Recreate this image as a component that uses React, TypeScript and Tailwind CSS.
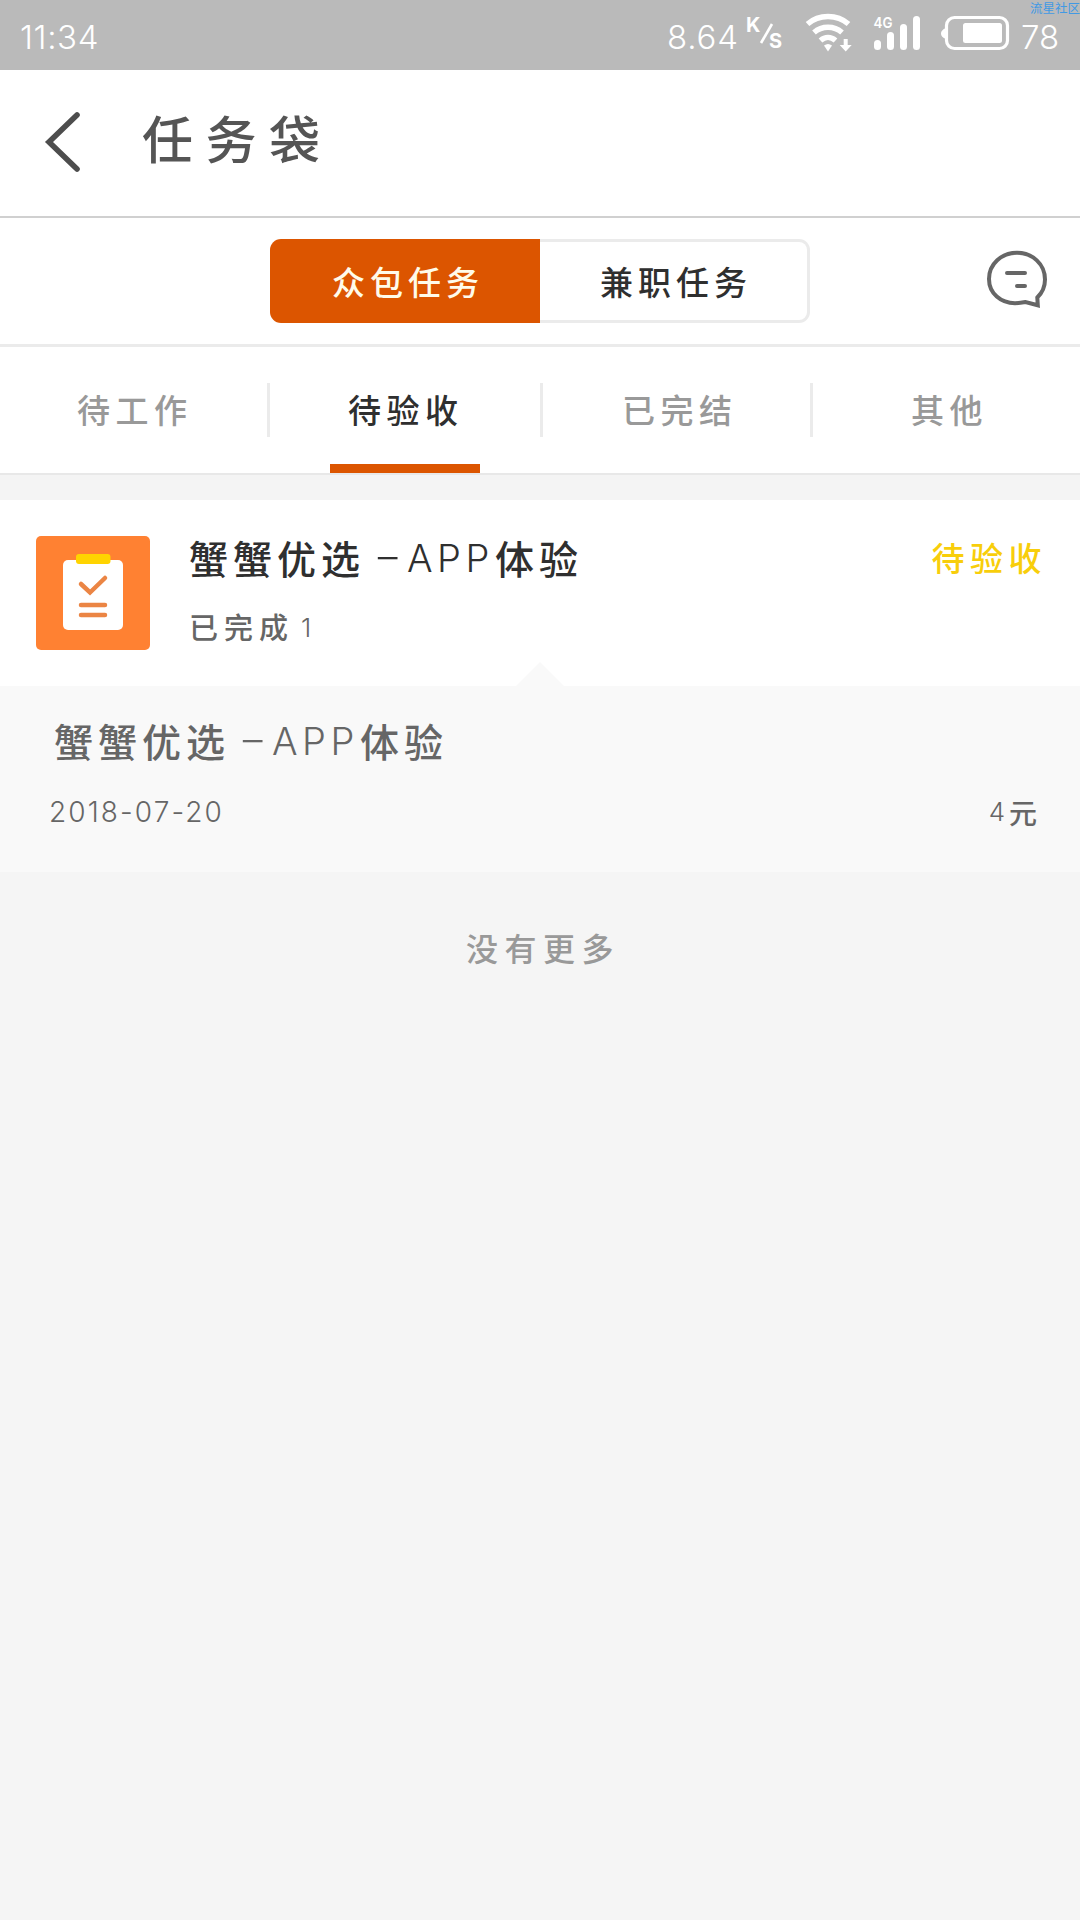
import clsx from "clsx";

const tabs = [
  { label: "待工作", pad: "pl-[77px]", width: "w-[267px]" },
  { label: "待验收", pad: "pl-[78px]", width: "w-[270px]" },
  { label: "已完结", pad: "pl-[79px]", width: "w-[267px]" },
  { label: "其他", pad: "pl-[98px]", width: "w-[267px]" },
];

const StatusBar = () => (
  <div className="relative flex h-[70px] bg-[#bababa] pt-[13px] font-['Inter'] text-[33px] leading-[48px] font-light text-white">
    <span className="ml-[20px] w-[647px] tracking-[0.6px]">11:34</span>
    <span className="w-[78px] tracking-[0.8px]">8.64</span>
    <svg className="-mt-[13px] h-[70px] w-[56px]" viewBox="745 0 56 70">
      <path d="M772 24L761 43" stroke="#fff" strokeWidth="2.6" />
      <text x="746" y="32" fontSize="20" fontWeight="700" fill="#fff">
        K
      </text>
      <text x="769" y="48" fontSize="20" fontWeight="700" fill="#fff">
        S
      </text>
    </svg>
    <svg className="-mt-[13px] h-[70px] w-[218px]" viewBox="801 0 218 70">
      {/* wifi */}
      <g fill="none" stroke="#fff" strokeWidth="5.500">
        <path d="M807.500 24C819 14 837 14 848.500 24" />
        <path d="M814 32.500C822 25.500 834 25.500 842 32.500" />
        <path d="M820.500 40.500C825 36.500 831 36.500 835.500 40.500" />
      </g>
      <path d="M824 45.500q4-3 8 0l-4 6z" fill="#fff" />
      <path d="M843.700 39h4v6h4l-6 6.500l-6-6.500h4z" fill="#fff" />
      {/* signal */}
      <text x="873.500" y="28" fontSize="15" fontWeight="600" fill="#fff" textLength="19" lengthAdjust="spacingAndGlyphs">
        4G
      </text>
      <g fill="#fff">
        <rect x="874" y="40" width="7" height="10" rx="3.500" />
        <rect x="887" y="32" width="7" height="18" rx="3.500" />
        <rect x="900" y="24" width="7" height="26" rx="3.500" />
        <rect x="913" y="16" width="7" height="34" rx="3.500" />
      </g>
      {/* battery */}
      <rect x="946.500" y="17.500" width="61" height="31" rx="8" fill="none" stroke="#fff" strokeWidth="3.200" />
      <path d="M946 28q-5 2-5 5.500t5 5.500z" fill="#fff" />
      <rect x="963" y="23" width="39" height="20" rx="2.500" fill="#fff" />
    </svg>
    <span className="ml-[2px]">78</span>
    <span className="absolute top-0 right-0 font-['Noto_Sans_CJK_SC'] text-[12.500px] leading-[15px] font-normal whitespace-nowrap text-[#4199e4]">
      流星社区
    </span>
  </div>
);

const Header = () => (
  <div className="flex h-[148px] items-center border-b-2 border-[#d0d0d0]">
    <svg className="mt-[-5px] ml-[40px] h-[64px] w-[44px]" viewBox="40 108 44 64">
      <path d="M77 114L49 141L77 168" fill="none" stroke="#4d4d4d" strokeWidth="5.600" strokeLinecap="round" />
    </svg>
    <h1 className="mt-[-11px] ml-[58px] text-[51px] leading-none font-medium tracking-[12.500px] text-[#555]">
      任务袋
    </h1>
  </div>
);

const ModeSwitch = () => (
  <div className="flex h-[129px] items-start border-b-[3px] border-[#ebebeb] pt-[21px] pl-[270px] text-[33px] tracking-[5px]">
    <button className="h-[84px] w-[270px] rounded-l-[11px] bg-[#dc5500] pl-[62px] text-left leading-[83px] font-medium text-[#fffbea]">
      众包任务
    </button>
    <button className="h-[84px] w-[270px] rounded-r-[11px] border-[3px] border-l-0 border-[#ebebeb] pl-[60px] text-left leading-[77px] font-medium text-[#2f2f2f]">
      兼职任务
    </button>
    <svg className="mt-[8px] ml-[174px] h-[66px] w-[66px]" viewBox="984 247 66 66">
      <g fill="none" stroke="#666" strokeWidth="4" strokeLinecap="round">
        <path d="M1037.300 297.500C1042 293 1045 286.500 1045 279.500C1045 264 1032.500 252.800 1017 252.800C1001.500 252.800 989 264 989 279C989 293.500 1001 303.200 1015 303.200C1019 303.200 1022.500 302.600 1025.500 302L1037.800 305.300Z" />
        <path d="M1007 273H1025M1017 286H1025" />
      </g>
    </svg>
  </div>
);

const Tabs = () => (
  <div className="flex h-[128px] items-start border-b-2 border-[#e8e8e8]">
    {tabs.map((tab, i) => (
      <div key={tab.label} className="flex">
        {i > 0 && <div className="mt-[36px] h-[54px] w-[3px] bg-[#ebebeb]" />}
        <div className={clsx("relative h-[126px]", tab.width)}>
          <div
            className={clsx(
              "pt-[35px] text-[33px] leading-[54px] font-medium tracking-[5.500px] whitespace-nowrap",
              tab.pad,
              i === 1 ? "text-[#2f2f2f]" : "text-[#999]"
            )}
          >
            {tab.label}
          </div>
          {i === 1 && (
            <div className="absolute bottom-0 left-[60px] h-[9px] w-[150px] bg-[#dc5500]" />
          )}
        </div>
      </div>
    ))}
  </div>
);

const TaskTitle = () => (
  <div className="flex text-[39px] leading-[56px] font-medium tracking-[5px] whitespace-nowrap">
    <span className="w-[184px]">蟹蟹优选</span>
    <span className="w-[20px] origin-left scale-x-[1.75] font-['Inter'] text-[37px] font-light tracking-normal">
      -
    </span>
    <span className="ml-[14px] w-[88px] font-['Inter'] text-[38px] leading-[58px] font-light tracking-[4.500px]">
      APP
    </span>
    <span>体验</span>
  </div>
);

const TaskCard = () => (
  <div className="relative flex h-[186px] bg-white pt-[36px] pr-[30px] pl-[36px]">
    <svg className="h-[114px] w-[114px]" viewBox="0 0 114 114">
      <rect width="114" height="114" rx="5" fill="#ff8132" />
      <rect x="27" y="24" width="60" height="70" rx="5" fill="#fff" />
      <rect x="40" y="18" width="34.500" height="10" rx="3" fill="#ffd400" />
      <g fill="none" stroke="#eb8544" strokeWidth="4.500" strokeLinecap="round">
        <path d="M45 48L54 56.500L69 42" />
        <path d="M45 69H69M45 79H69" />
      </g>
    </svg>
    <div className="-mt-[7px] ml-[39px] text-[#2f2f2f]">
      <TaskTitle />
      <div className="mt-[15px] flex text-[29px] leading-[48px] font-medium tracking-[6px] text-[#666]">
        已完成
        <span className="mt-[2px] ml-[7px] font-['Inter'] text-[26px] font-light tracking-normal">
          1
        </span>
      </div>
    </div>
    <span className="mr-[3px] ml-auto h-[44px] text-[33px] leading-[42px] font-medium tracking-[5.500px] text-[#f8ce0b]">
      待验收
    </span>
    {/* pointer to the detail block */}
    <svg className="absolute bottom-0 left-[516px] h-[24px] w-[48px]" viewBox="0 0 48 24">
      <path d="M24 0L48 24H0z" fill="#f9f9f9" />
    </svg>
  </div>
);

const TaskDetail = () => (
  <div className="h-[186px] bg-[#f9f9f9] pt-[26px] pr-[43px] pl-[54px] text-[#666]">
    <TaskTitle />
    <div className="mt-[20px] -ml-[5px] flex items-center justify-between leading-[44px]">
      <span className="font-['Inter'] text-[28px] font-light tracking-[2.100px]">2018-07-20</span>
      <span className="flex items-center text-[28px] font-medium">
        <span className="mr-[4px] font-['Inter'] text-[26px] font-light">4</span>元
      </span>
    </div>
  </div>
);

export default function App() {
  return (
    <div className="h-[1920px] w-[1080px] overflow-hidden bg-[#f5f5f5] font-['Noto_Sans_CJK_SC',sans-serif]">
      <StatusBar />
      <div className="bg-white">
        <Header />
        <ModeSwitch />
        <Tabs />
      </div>
      <div className="h-[25px] bg-[#f4f4f4]" />
      <TaskCard />
      <TaskDetail />
      <div className="mt-[53px] pl-[466px] text-[32px] leading-[44px] font-medium tracking-[6.500px] text-[#999]">
        没有更多
      </div>
    </div>
  );
}
